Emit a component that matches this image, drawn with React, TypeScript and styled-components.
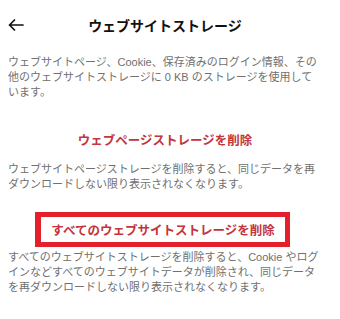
import React from 'react';
import styled, { createGlobalStyle } from 'styled-components';

const GlobalStyle = createGlobalStyle`
  html, body {
    margin: 0;
    padding: 0;
    background: #ffffff;
  }
  body {
    font-family: "Liberation Sans", "Noto Sans CJK JP", sans-serif;
  }
`;

const Page = styled.div`
  width: 340px;
  height: 319px;
  box-sizing: border-box;
  padding: 0 18px 0 8px;
  background: #ffffff;
  overflow: hidden;
`;

const Header = styled.div`
  display: grid;
  grid-template-columns: 30px 1fr 30px;
  align-items: center;
  height: 49px;
`;

const BackButton = styled.div`
  display: flex;
  align-items: center;
  height: 20px;
  margin-top: 1px;
`;

const Title = styled.div`
  text-align: center;
  font-size: 14px;
  font-weight: 700;
  color: #111111;
`;

const Description = styled.p<{ $top?: number }>`
  margin: ${(p) => p.$top ?? 0}px 0 0 0;
  font-size: 11px;
  line-height: 15px;
  color: #707070;
  line-break: strict;
`;

const Section = styled.div<{ $top: number }>`
  display: flex;
  flex-direction: column;
  margin-top: ${(p) => p.$top}px;
`;

const DeleteLink = styled.div`
  text-align: center;
  font-size: 12.5px;
  line-height: 18px;
  font-weight: 700;
  color: #c3343b;
`;

const Highlight = styled.div`
  align-self: center;
  box-sizing: border-box;
  width: 255px;
  height: 35px;
  margin-left: -5px;
  border: 5px solid #e3202c;
  border-left-width: 6px;
  display: flex;
  align-items: center;
  justify-content: center;
  padding-top: 2px;
`;

const ArrowIcon = () => (
  <svg width="16" height="12" viewBox="0 0 16 12" fill="none">
    <path
      d="M15 6H1.5M6.5 1L1.5 6L6.5 11"
      stroke="#111111"
      strokeWidth="1.7"
      strokeLinecap="round"
      strokeLinejoin="round"
    />
  </svg>
);

export default function App() {
  return (
    <>
      <GlobalStyle />
      <Page>
        <Header>
          <BackButton>
            <ArrowIcon />
          </BackButton>
          <Title>ウェブサイトストレージ</Title>
          <div />
        </Header>
        <Description $top={6}>
          ウェブサイトページ、Cookie、保存済みのログイン情報、その他のウェブサイトストレージに 0 KB のストレージを使用しています。
        </Description>
        <Section $top={32}>
          <DeleteLink>ウェブページストレージを削除</DeleteLink>
          <Description $top={12}>
            ウェブサイトページストレージを削除すると、同じデータを再ダウンロードしない限り表示されなくなります。
          </Description>
        </Section>
        <Section $top={20}>
          <Highlight>
            <DeleteLink>すべてのウェブサイトストレージを削除</DeleteLink>
          </Highlight>
          <Description $top={3}>
            すべてのウェブサイトストレージを削除すると、Cookie やログインなどすべてのウェブサイトデータが削除され、同じデータを再ダウンロードしない限り表示されなくなります。
          </Description>
        </Section>
      </Page>
    </>
  );
}
